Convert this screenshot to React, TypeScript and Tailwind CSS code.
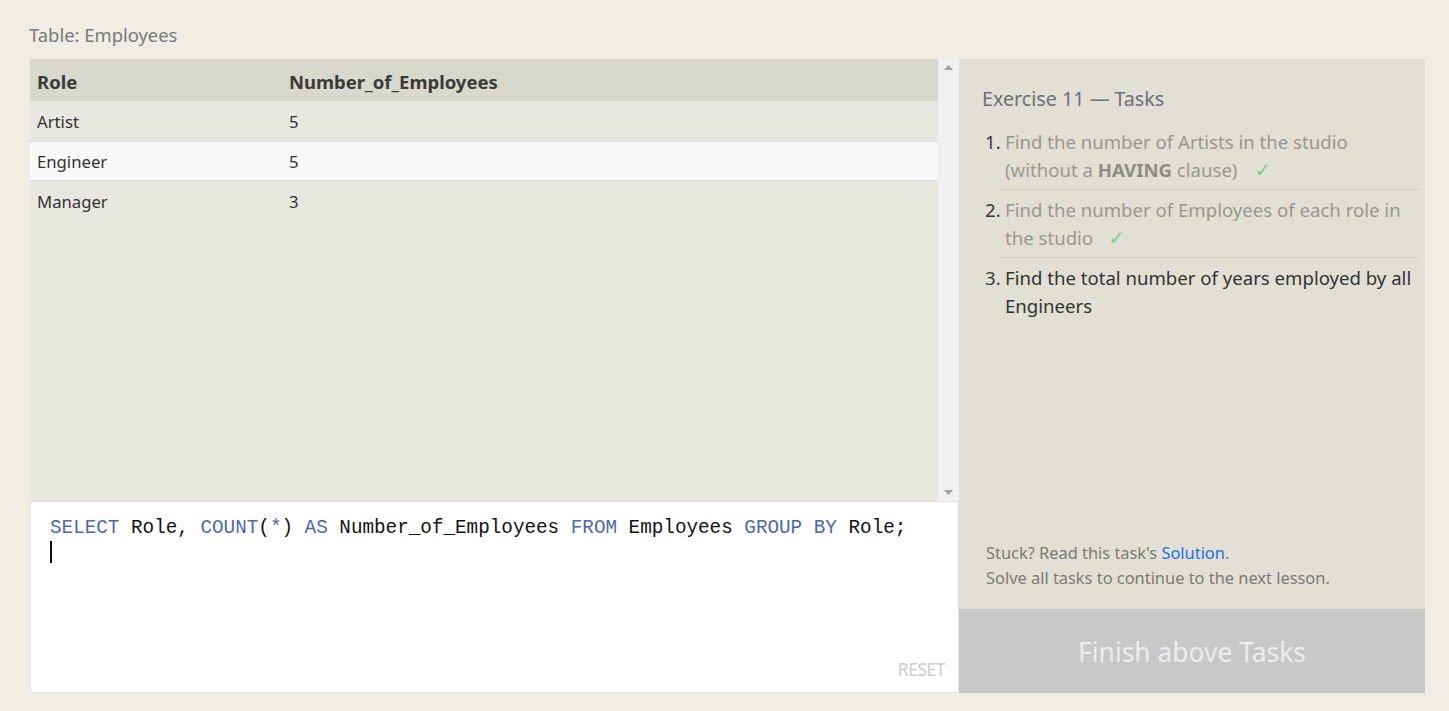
const rows = [
  { role: "Artist", count: 5 },
  { role: "Engineer", count: 5 },
  { role: "Manager", count: 3 },
];

const sans = "font-['Noto_Sans',sans-serif]";

function Kw({ children }: { children: React.ReactNode }) {
  return <span className="text-[#4a6aab]">{children}</span>;
}

export default function App() {
  return (
    <div className={`min-h-screen w-full bg-[#f0ede5] ${sans}`}>
      <div className="pl-[30px] pt-[21px]">
        <div className="text-[18.4px] leading-[28px] text-[#7a7a7a] -ml-[1px] mb-[10px]">Table: Employees</div>

        <div className="flex h-[634px] w-[1395px]">
          {/* ── Left: results + editor ── */}
          <div className="w-[929px] flex flex-col">
            <div className="h-[443px] flex border-b border-[#e0e0e0]">
              <div className="flex-1 bg-[#e9e8e0]">
                <div className="flex h-[42px] bg-[#d9d8cc] items-center pt-[4px] text-[18.5px] font-bold text-[#3a3a3a]">
                  <div className="w-[259px] pl-[7px]">Role</div>
                  <div>Number_of_Employees</div>
                </div>
                {rows.map((r, i) => (
                  <div key={r.role}
                    className={`flex h-[40px] items-center pt-[2px] text-[16.7px] text-[#333] ${i === 1 ? "bg-[#f9f9f9] border-y border-[#dcdcdc]" : ""}`}>
                    <div className="w-[259px] pl-[7px]">{r.role}</div>
                    <div>{r.count}</div>
                  </div>
                ))}
              </div>
              <div className="w-[21px] bg-[#f1f1f1] flex flex-col items-center justify-between py-[6px]">
                <svg width="9" height="5" viewBox="0 0 9 5"><path d="M0 5 L4.5 0 L9 5 Z" fill="#a3a3a3" /></svg>
                <svg width="9" height="5" viewBox="0 0 9 5"><path d="M0 0 L4.5 5 L9 0 Z" fill="#a3a3a3" /></svg>
              </div>
            </div>

            <div className="flex-1 bg-white border-x border-b border-[#e3e3e3] relative">
              <div className="pl-[19px] pt-[13px] font-['Liberation_Mono',monospace] text-[19.3px] leading-[26px] text-[#111] whitespace-pre">
                <Kw>SELECT</Kw> Role, <Kw>COUNT</Kw>(<Kw>*</Kw>) <Kw>AS</Kw> Number_of_Employees <Kw>FROM</Kw> Employees <Kw>GROUP</Kw> <Kw>BY</Kw> Role;
              </div>
              <div className="ml-[19px] mt-[0px] w-[2px] h-[22px] bg-[#111]" />
              <div className="absolute right-[13px] bottom-[10px] text-[17.5px] text-[#cccccc] tracking-[-0.5px]">RESET</div>
            </div>
          </div>

          {/* ── Right: tasks ── */}
          <div className="flex-1 flex flex-col bg-[#e2dfd4]">
            <div className="flex-1 flex flex-col pl-[23px] pr-[4px] pt-[25px]">
              <div className="text-[19.7px] leading-[30px] text-[#6b7079]">Exercise 11 — Tasks</div>
              <ol className="mt-[14px] ml-[18px] text-[18.6px] leading-[28px]">
                <li className="flex pb-[5px] border-b border-[#d3d0c5]">
                  <span className="w-[20px] -ml-[15px] shrink-0 text-[#3a3a3a]">1.</span>
                  <span className="flex-1 text-[#999891]">
                    Find the number of Artists in the studio (without a <b className="text-[#8c8b85]">HAVING</b> clause)
                    <span className="ml-[17px] text-[20px] text-[#7fcf8e] font-['DejaVu_Sans',sans-serif]">✓</span>
                  </span>
                </li>
                <li className="flex pt-[6px] pb-[5px] border-b border-[#d3d0c5]">
                  <span className="w-[20px] -ml-[15px] shrink-0 text-[#3a3a3a]">2.</span>
                  <span className="flex-1 text-[#999891]">
                    Find the number of Employees of each role in the studio
                    <span className="ml-[15px] text-[20px] text-[#7fcf8e] font-['DejaVu_Sans',sans-serif]">✓</span>
                  </span>
                </li>
                <li className="flex pt-[6px]">
                  <span className="w-[20px] -ml-[15px] shrink-0 text-[#3a3a3a]">3.</span>
                  <span className="flex-1 text-[#333]">Find the total number of years employed by all Engineers</span>
                </li>
              </ol>
              <div className="mt-auto pb-[19px] pl-[4px] text-[16.4px] leading-[25px] text-[#7b7b76]">
                <div>Stuck? Read this task's <span className="text-[#1a73e8]">Solution</span>.</div>
                <div>Solve all tasks to continue to the next lesson.</div>
              </div>
            </div>
            <button className="h-[84px] pt-[4px] bg-[#c8c8c8] text-[26.4px] text-[#ededed] w-full">Finish above Tasks</button>
          </div>
        </div>
      </div>
    </div>
  );
}
